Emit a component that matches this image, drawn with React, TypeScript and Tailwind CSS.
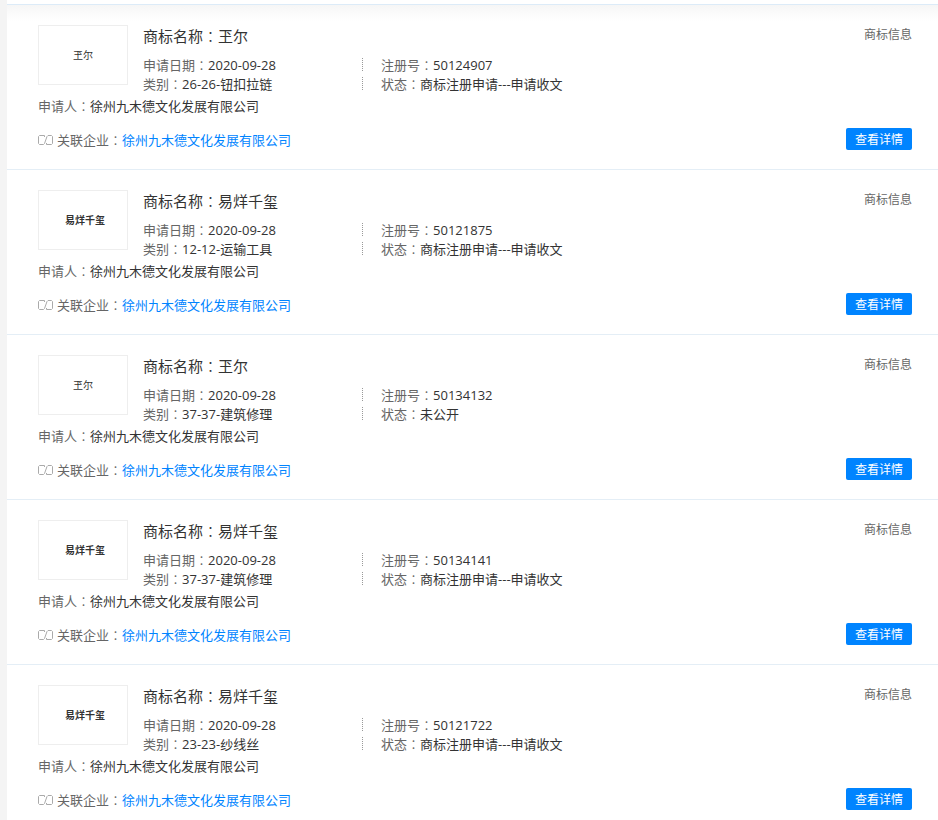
type Trademark = {
  name: string;
  date: string;
  category: string;
  regNo: string;
  status: string;
};

const company = "徐州九木德文化发展有限公司";

const trademarks: Trademark[] = [
  { name: "玊尔", date: "2020-09-28", category: "26-26-钮扣拉链", regNo: "50124907", status: "商标注册申请---申请收文" },
  { name: "易烊千玺", date: "2020-09-28", category: "12-12-运输工具", regNo: "50121875", status: "商标注册申请---申请收文" },
  { name: "玊尔", date: "2020-09-28", category: "37-37-建筑修理", regNo: "50134132", status: "未公开" },
  { name: "易烊千玺", date: "2020-09-28", category: "37-37-建筑修理", regNo: "50134141", status: "商标注册申请---申请收文" },
  { name: "易烊千玺", date: "2020-09-28", category: "23-23-纱线丝", regNo: "50121722", status: "商标注册申请---申请收文" },
];

// the TC face centres the full-width colon in its cell
function Label({ text }: { text: string }) {
  return (
    <span className="text-[#666]">
      {text}
      <span className="font-['Noto_Sans_CJK_TC',sans-serif] font-light">：</span>
    </span>
  );
}

function LinkIcon() {
  return (
    <svg className="mr-1 shrink-0" width="15" height="10" viewBox="0 0 15 10" fill="none" stroke="#aaa" aria-hidden="true">
      <path d="M6.5 2V.5H1.5L.5 1.5V8.5L1.5 9.5H5.5L6.5 8.5L9 1.5L10 .5H13.5L14.5 1.5V8.5L13.5 9.5H8.5V8" />
    </svg>
  );
}

function TrademarkItem({ item }: { item: Trademark }) {
  const isShort = item.name.length === 2;
  return (
    <article className="flex h-[165px] justify-between border-b border-[#e4eef6] pt-5 pr-[26px] pb-[19px] pl-[31px]">
      <div>
        <div className="flex gap-[15px]">
          <div
            className={
              isShort
                ? "flex h-[60px] w-[90px] items-center justify-center border border-[#eee] text-[10px]"
                : "flex h-[60px] w-[90px] items-center justify-center border border-[#eee] pl-1 text-[10px] font-bold"
            }
          >
            {item.name}
          </div>
          <div>
            <h3 className="mb-2 text-[15px] leading-[22px]">
              商标名称<span className="font-['Noto_Sans_CJK_TC',sans-serif] font-light">：</span>
              {item.name}
            </h3>
            <div className="grid auto-rows-[19px] grid-cols-[219px_auto] leading-[19px]">
              <p>
                <Label text="申请日期" />
                {item.date}
              </p>
              <p className="my-[3px] border-l border-dotted border-[#999] pl-[18px] leading-[13px]">
                <Label text="注册号" />
                {item.regNo}
              </p>
              <p>
                <Label text="类别" />
                {item.category}
              </p>
              <p className="my-[3px] border-l border-dotted border-[#999] pl-[18px] leading-[13px]">
                <Label text="状态" />
                {item.status}
              </p>
            </div>
          </div>
        </div>
        <p className="mt-[3px] leading-[20px]">
          <Label text="申请人" />
          {company}
        </p>
        <p className="mt-[14px] flex items-center leading-[20px]">
          <LinkIcon />
          <Label text="关联企业" />
          <a href="#" className="text-[#0084ff]">
            {company}
          </a>
        </p>
      </div>
      <div className="flex flex-col items-end justify-between text-xs">
        <span className="leading-[20px] text-[#666]">商标信息</span>
        <button type="button" className="h-[22px] w-[66px] rounded-xs bg-[#0084ff] pt-0.5 text-white">
          查看详情
        </button>
      </div>
    </article>
  );
}

export default function App() {
  return (
    <main className="overflow-hidden bg-[#f4f4f4] pl-[7px] font-['Open_Sans','Noto_Sans_CJK_SC',sans-serif] text-[13px] text-[#333]">
      <section className="bg-white">
        <div className="h-[5px] border-b border-[#dcebf8]" />
        <div className="bg-linear-to-b from-[#f6f6f6] to-white to-[16px]">
          {trademarks.map((item) => (
            <TrademarkItem key={item.regNo} item={item} />
          ))}
        </div>
      </section>
    </main>
  );
}
